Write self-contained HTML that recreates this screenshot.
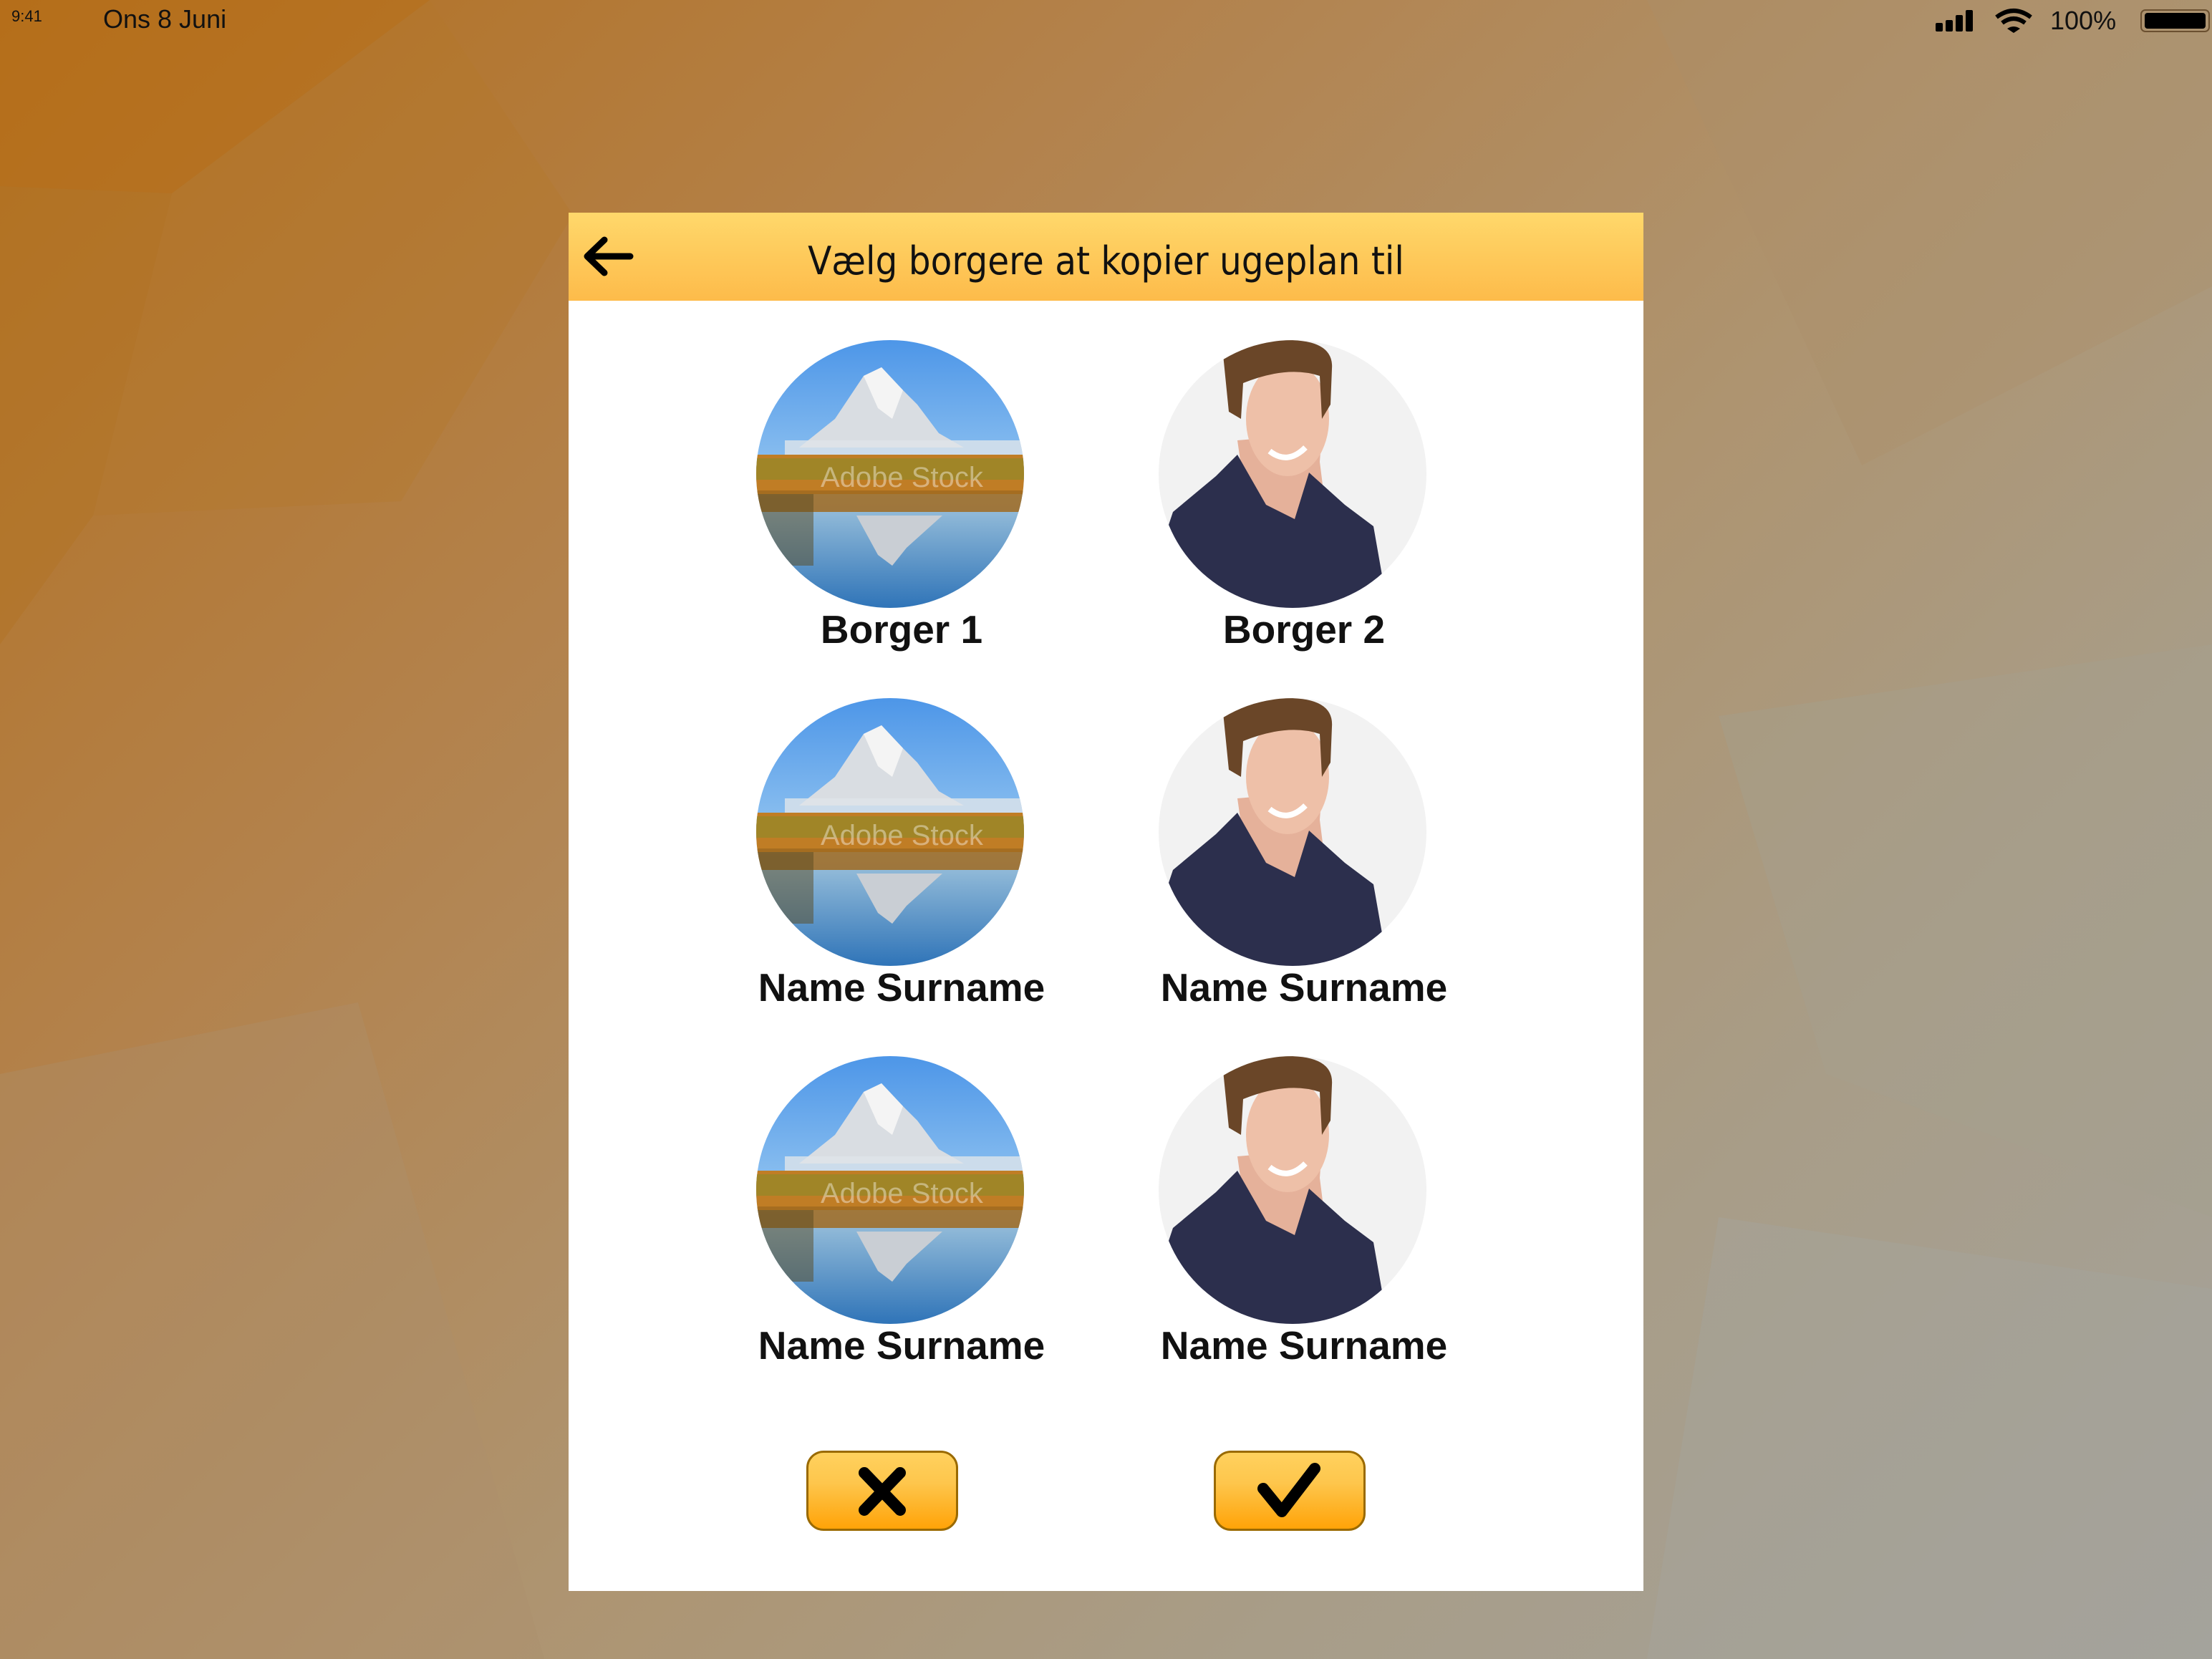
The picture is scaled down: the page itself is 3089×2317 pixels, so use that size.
<!DOCTYPE html>
<html><head><meta charset="utf-8"><style>
html,body{margin:0;padding:0}
body{width:3089px;height:2317px;position:relative;overflow:hidden;font-family:"Liberation Sans",sans-serif;
background:linear-gradient(135deg,#b36f1e 0%,#b3824c 30%,#ae9470 55%,#a89d88 75%,#a4a29b 100%);}
.st{position:absolute;color:#111;}
#dlg{position:absolute;left:794px;top:297px;width:1501px;height:1925px;background:#fff;}
#hdr{position:absolute;left:0;top:0;width:1501px;height:123px;background:linear-gradient(#ffd86b,#fdbb4a);}
#hdr .t{position:absolute;left:0;right:0;top:36px;text-align:center;font-size:54px;color:#111;font-family:"DejaVu Sans Condensed","Liberation Sans Narrow","Liberation Sans",sans-serif;}
.av{position:absolute;width:374px;height:374px;}
.lb{position:absolute;width:600px;text-align:center;font-weight:bold;font-size:55px;color:#111;}
.btn{position:absolute;width:212px;height:112px;top:1729px;border:3px solid #9a6a00;border-radius:24px;box-sizing:border-box;background:linear-gradient(#ffd15e,#fec64c 40%,#ffa308);}
</style></head><body>
<svg width="3089" height="2317" style="position:absolute;left:0;top:0">
<polygon points="0,0 600,0 240,270 0,260" fill="#b86d15" opacity=".5"/>
<polygon points="240,270 600,0 800,300 560,700 130,720" fill="#b5782c" opacity=".35"/>
<polygon points="0,260 240,270 130,720 0,900" fill="#b27420" opacity=".4"/>
<polygon points="2300,0 3089,0 3089,400 2600,650" fill="#ac8f6a" opacity=".35"/>
<polygon points="2400,1000 3089,900 3089,1700 2550,1500" fill="#a59f8f" opacity=".4"/>
<polygon points="0,1500 500,1400 760,2317 0,2317" fill="#ab8e6e" opacity=".35"/>
<polygon points="2400,1700 3089,1800 3089,2317 2300,2317" fill="#a4a49e" opacity=".4"/>
</svg>
<div class="st" style="left:16px;top:10px;font-size:22px">9:41</div>
<div class="st" style="left:144px;top:6px;font-size:36px">Ons 8 Juni</div>
<svg style="position:absolute;left:2700px;top:10px" width="389" height="40" viewBox="0 0 389 40">
<rect x="3" y="22" width="10" height="12" rx="2"/><rect x="17" y="18" width="10" height="16" rx="2"/><rect x="31" y="11" width="10" height="23" rx="2"/><rect x="45" y="4" width="10" height="30" rx="2"/>
<path d="M88 14 Q112 -4 136 14" stroke="#000" stroke-width="6" fill="none"/><path d="M96 22 Q112 10 128 22" stroke="#000" stroke-width="6" fill="none"/><path d="M103 30 L112 36 L121 30 Q112 24 103 30Z"/>
<text x="163" y="31" font-size="36" font-family="Liberation Sans" fill="#111">100%</text>
<rect x="290" y="4" width="95" height="30" rx="6" fill="none" stroke="#6b5030" stroke-width="2"/><rect x="295" y="8" width="85" height="22" rx="4"/>
</svg>
<svg width="0" height="0" style="position:absolute">
<defs>
<clipPath id="cc"><circle cx="187" cy="187" r="187"/></clipPath>
<linearGradient id="sky" x1="0" y1="0" x2="0" y2="1"><stop offset="0" stop-color="#4d96e8"/><stop offset=".5" stop-color="#8fc2f0"/><stop offset=".55" stop-color="#a9cbe0"/><stop offset="1" stop-color="#2f74b8"/></linearGradient>
<g id="mt">
<g clip-path="url(#cc)">
<rect width="374" height="374" fill="url(#sky)"/>
<polygon points="60,150 110,110 150,50 175,38 205,70 225,90 255,130 290,150" fill="#d9dde2"/>
<polygon points="150,50 175,38 205,70 190,110 170,95" fill="#f4f4f4"/>
<rect x="40" y="140" width="340" height="25" fill="#dfe5ea" opacity=".8"/>
<rect x="0" y="160" width="374" height="55" fill="#c07d25"/>
<rect x="0" y="165" width="374" height="30" fill="#8a8a2a" opacity=".6"/>
<rect x="0" y="210" width="374" height="30" fill="#a06a20" opacity=".85"/>
<polygon points="100,245 140,245 170,300 190,315 210,290 260,245 290,245" fill="#c9ced4"/>
<rect x="0" y="215" width="80" height="100" fill="#5a4a20" opacity=".5"/>
<text x="90" y="205" font-size="40" fill="#fff" opacity=".4" font-family="Liberation Sans">Adobe Stock</text>
</g></g>
<g id="pp">
<g clip-path="url(#cc)">
<rect width="374" height="374" fill="#f2f2f2"/>
<path d="M110 140 L120 210 L135 250 L235 250 L225 170 L228 130 Z" fill="#e5b19a"/>
<ellipse cx="180" cy="110" rx="58" ry="80" fill="#eec0a8"/>
<path d="M90 20 Q95 -5 180 0 Q245 0 242 40 L240 90 L228 110 L225 50 Q180 35 118 60 L115 110 L98 100Z" fill="#6a4628"/>
<path d="M155 155 Q180 175 205 150" stroke="#fff" stroke-width="8" fill="none"/>
<path d="M0 300 L20 240 L80 190 L110 160 L150 230 L190 250 L210 185 L260 230 L300 260 L320 374 L0 374Z" fill="#2c2f4d"/>
</g></g>
</defs></svg>
<div id="dlg">
<div id="hdr">
<svg style="position:absolute;left:16px;top:30px" width="78" height="62" viewBox="0 0 78 62"><path d="M70 31 H10 M34 8 L10 31 L34 54" stroke="#000" stroke-width="9" stroke-linecap="round" stroke-linejoin="round" fill="none"/></svg>
<div class="t">Vælg borgere at kopier ugeplan til</div>
</div>
<svg class="av" style="left:262px;top:178px"><use href="#mt"/></svg>
<svg class="av" style="left:824px;top:178px"><use href="#pp"/></svg>
<svg class="av" style="left:262px;top:678px"><use href="#mt"/></svg>
<svg class="av" style="left:824px;top:678px"><use href="#pp"/></svg>
<svg class="av" style="left:262px;top:1178px"><use href="#mt"/></svg>
<svg class="av" style="left:824px;top:1178px"><use href="#pp"/></svg>
<div class="lb" style="left:165px;top:550px">Borger 1</div>
<div class="lb" style="left:727px;top:550px">Borger 2</div>
<div class="lb" style="left:165px;top:1050px">Name Surname</div>
<div class="lb" style="left:727px;top:1050px">Name Surname</div>
<div class="lb" style="left:165px;top:1550px">Name Surname</div>
<div class="lb" style="left:727px;top:1550px">Name Surname</div>
<div class="btn" style="left:332px"><svg width="206" height="106" viewBox="0 0 206 106"><path d="M78 28 L128 80 M128 28 L78 80" stroke="#000" stroke-width="16" stroke-linecap="round"/></svg></div>
<div class="btn" style="left:901px"><svg width="206" height="106" viewBox="0 0 206 106"><path d="M66 50 L92 82 L138 22" stroke="#000" stroke-width="16" stroke-linecap="round" stroke-linejoin="round" fill="none"/></svg></div>
</div>
</body></html>
